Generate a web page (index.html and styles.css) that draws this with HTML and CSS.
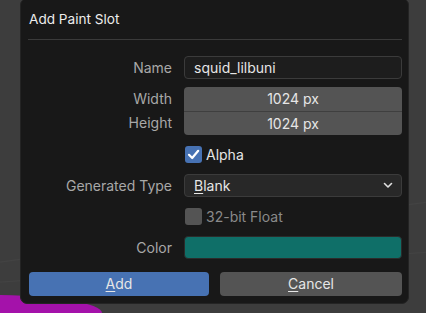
FILE: index.html
```html
<!DOCTYPE html>
<html lang="en">
<head>
    <meta charset="UTF-8">
    <meta name="viewport" content="width=device-width, initial-scale=1.0">
    <title>Add Paint Slot</title>
    <link rel="stylesheet" href="styles.css">
</head>
<body>
    <div class="viewport">
        <div class="blob"></div>
        <div class="dialog">
            <div class="title">Add Paint Slot</div>
            <div class="sep"></div>
            <div class="form">
                <div class="label">Name</div>
                <div class="field text">squid_lilbuni</div>

                <div class="label stack">
                    <span>Width</span>
                    <span>Height</span>
                </div>
                <div class="num-group">
                    <div class="num">1024 px</div>
                    <div class="num">1024 px</div>
                </div>

                <div class="label"></div>
                <div class="check-row">
                    <span class="box on">
                        <svg width="13" height="13" viewBox="0 0 13 13">
                            <path d="M2 6.8 L5.2 10 L11.2 2.8" fill="none" stroke="#fff" stroke-width="2.2" stroke-linecap="round" stroke-linejoin="round"/>
                        </svg>
                    </span>
                    <span class="check-label">Alpha</span>
                </div>

                <div class="label">Generated Type</div>
                <div class="field select">
                    <span><u>B</u>lank</span>
                    <svg width="10" height="7" viewBox="0 0 10 7">
                        <path d="M1.5 1.5 L5 5 L8.5 1.5" fill="none" stroke="#e0e0e0" stroke-width="1.6" stroke-linecap="round" stroke-linejoin="round"/>
                    </svg>
                </div>

                <div class="label"></div>
                <div class="check-row">
                    <span class="box"></span>
                    <span class="check-label dim">32-bit Float</span>
                </div>

                <div class="label">Color</div>
                <div class="swatch"></div>
            </div>
            <div class="buttons">
                <div class="btn primary"><u>A</u>dd</div>
                <div class="btn"><u>C</u>ancel</div>
            </div>
        </div>
    </div>
</body>
</html>
```

FILE: styles.css
```css
* {
    margin: 0;
    padding: 0;
    box-sizing: border-box;
}
body {
    width: 426px;
    height: 313px;
    overflow: hidden;
    background: #3d3d3d;
    font-family: "Inter", "DejaVu Sans", sans-serif;
    font-size: 14px;
    color: #e6e6e6;
}
.viewport {
    position: relative;
    height: 313px;
    overflow: hidden;
    background:
        linear-gradient(172deg, transparent 70%, rgba(255, 255, 255, 0.03) 70.3%, transparent 70.6%),
        linear-gradient(176deg, transparent 82%, rgba(255, 255, 255, 0.03) 82.3%, transparent 82.6%),
        #3d3d3d;
}
.blob {
    position: absolute;
    left: -122px;
    top: 295px;
    width: 224px;
    height: 18px;
    border-radius: 112px 112px 0 0 / 18px 18px 0 0;
    background: #a412aa;
}
.dialog {
    position: relative;
    margin-left: 20px;
    top: -2px;
    width: 389px;
    height: 306px;
    background: #181818;
    border: 1px solid #242424;
    border-radius: 7px;
    padding: 0 6px 0 7px;
}
.title {
    height: 40px;
    line-height: 41px;
    padding-left: 1px;
    font-size: 13.6px;
    color: #ececec;
}
.sep {
    height: 1px;
    background: #3a3a3a;
}
.form {
    display: grid;
    grid-template-columns: 143px 218px;
    column-gap: 12px;
    row-gap: 8px;
    margin-top: 16px;
    padding-left: 1px;
}
.label {
    text-align: right;
    color: #a8a8a8;
    line-height: 23px;
}
.label.stack {
    display: flex;
    flex-direction: column;
}
.label.stack span {
    line-height: 24px;
}
.field {
    height: 23px;
    border: 1px solid #3b3b3b;
    border-radius: 4px;
    padding-left: 9px;
    line-height: 21px;
}
.field.text {
    background: #1d1d1d;
}
.field.select {
    background: #282828;
    display: flex;
    justify-content: space-between;
    align-items: center;
    padding-right: 8px;
}
.num-group {
    border-radius: 4px;
    overflow: hidden;
    background: #545454;
}
.num {
    height: 24px;
    line-height: 24px;
    text-align: center;
    color: #e6e6e6;
}
.num + .num {
    border-top: 1px solid #3f3f3f;
    line-height: 23px;
}
.check-row {
    height: 23px;
    display: flex;
    align-items: center;
    gap: 4px;
    padding-left: 1px;
}
.box {
    width: 17px;
    height: 17px;
    border-radius: 3px;
    background: #545454;
    display: flex;
    align-items: center;
    justify-content: center;
}
.box.on {
    background: #4772b3;
}
.check-label {
    color: #e6e6e6;
}
.check-label.dim {
    color: #8a8a8a;
}
.swatch {
    height: 23px;
    border-radius: 4px;
    background: #0f6f68;
    border: 1px solid #2b2b2b;
}
.buttons {
    display: flex;
    gap: 11px;
    margin-top: 13px;
    padding-left: 1px;
}
.btn {
    height: 24px;
    line-height: 24px;
    text-align: center;
    border-radius: 4px;
    background: #545454;
    color: #e6e6e6;
    flex: 1;
}
.btn.primary {
    background: #4772b3;
    flex: 0 0 180px;
}
u {
    text-underline-offset: 2px;
}
```
